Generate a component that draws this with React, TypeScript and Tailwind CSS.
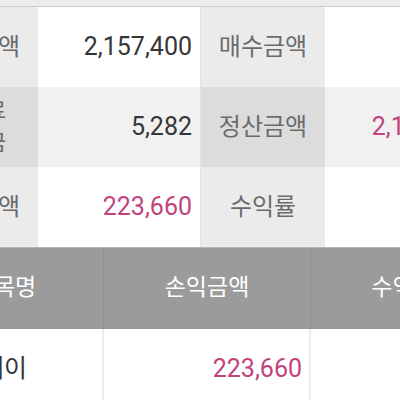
const font = { fontFamily: 'Roboto, "Noto Sans CJK KR", sans-serif' }

type Row = {
  label1: string
  value1: string
  label2: string
  value2: string
  pink1?: boolean
  pink2?: boolean
  shade?: boolean
}

const rows: Row[] = [
  { label1: '매도금액', value1: '2,157,400', label2: '매수금액', value2: '' },
  { label1: '수수료\n제세금', value1: '5,282', label2: '정산금액', value2: '2,152,118', pink2: true, shade: true },
  { label1: '손익금액', value1: '223,660', label2: '수익률', value2: '11.56%', pink1: true, pink2: true },
]

export default function App() {
  return (
    <div className="w-[400px] h-[400px] overflow-hidden bg-white" style={font}>
      {/* top edge */}
      <div className="h-[7px] bg-[#ececec] border-b border-[#cdcdcd]" />

      {/* summary grid */}
      <div className="ml-[-86px] w-[580px]">
        {rows.map((r, i) => (
          <div key={i} className="flex h-[80px]">
            <div
              className={`w-[124px] shrink-0 flex items-center justify-center text-center whitespace-pre-line text-[#6b6b6b] ${
                r.label1.includes('\n') ? 'text-[22px] leading-[32px]' : 'text-[24px]'
              } ${r.shade ? 'bg-[#dcdcdc]' : 'bg-[#ebebeb]'}`}
            >
              {r.label1}
            </div>
            <div
              className={`w-[163px] shrink-0 flex items-center justify-end pr-[8px] text-[25px] border-r border-[#e3e3e3] ${
                r.pink1 ? 'text-[#c2437c]' : 'text-[#363636]'
              } ${r.shade ? 'bg-[#f1f1f1]' : 'bg-white'}`}
            >
              {r.value1}
            </div>
            <div
              className={`w-[124px] shrink-0 flex items-center justify-center text-[24px] text-[#6b6b6b] ${
                r.shade ? 'bg-[#dcdcdc]' : 'bg-[#ebebeb]'
              }`}
            >
              {r.label2}
            </div>
            <div
              className={`w-[169px] shrink-0 flex items-center justify-end pr-[14px] text-[25px] ${
                r.pink2 ? 'text-[#c2437c]' : 'text-[#363636]'
              } ${r.shade ? 'bg-[#f1f1f1]' : 'bg-white'}`}
            >
              {r.value2}
            </div>
          </div>
        ))}
      </div>

      {/* list header */}
      <div className="flex h-[82px] ml-[-94px] w-[600px] bg-[#9b9b9b] border-t border-[#b5b5b5] text-white text-[23px]">
        <div className="w-[198px] shrink-0 flex items-center justify-center border-r border-[#8f8f8f]">종목명</div>
        <div className="w-[207px] shrink-0 flex items-center justify-center border-r border-[#8f8f8f]">손익금액</div>
        <div className="w-[184px] shrink-0 flex items-center justify-center">수익률</div>
      </div>

      {/* list body */}
      <div className="flex h-[80px] ml-[-94px] w-[600px] bg-white text-[25px]">
        <div className="w-[198px] shrink-0 flex items-center pl-[6px] border-r-2 border-[#ececec] text-[#363636]">카카오페이</div>
        <div className="w-[207px] shrink-0 flex items-center justify-end pr-[7px] border-r-2 border-[#ececec] text-[#c2437c]">
          223,660
        </div>
        <div className="w-[184px] shrink-0 flex items-center justify-end pr-[10px] text-[#c2437c]">11.56%</div>
      </div>
    </div>
  )
}
